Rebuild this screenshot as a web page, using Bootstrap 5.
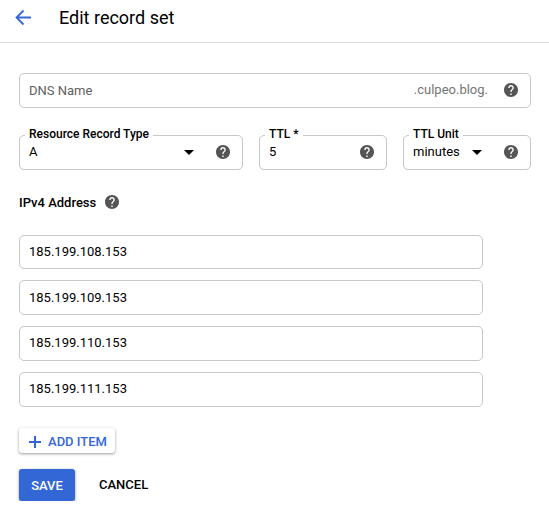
<!DOCTYPE html>
<html lang="en">
<head>
<meta charset="utf-8">
<meta name="viewport" content="width=device-width, initial-scale=1">
<title>Edit record set</title>
<link href="https://cdn.jsdelivr.net/npm/bootstrap@5.3.0/dist/css/bootstrap.min.css" rel="stylesheet">
<style>
body{font-family:Roboto,"Liberation Sans",sans-serif;font-size:13px;line-height:20px;color:#000;background:#fff;overflow:hidden}
.topbar{height:43px;border-bottom:1px solid #dcdcdc;padding:0 0 7px 14px}
.topbar h1{font-size:18px;line-height:24px;font-weight:400;margin-left:26px}
.back-icon{width:19px;height:19px;color:#3367d6}
.page{padding:30px 18px 0 19px}
.box{height:35px;border:1px solid #c8c8c8;border-radius:5px;padding:0 9px}
.box-value{padding-bottom:2px}
.fields{gap:16px;margin-top:27px}
.w-type{width:224px}.w-ttl{width:128px}
.float-label{top:-12px;left:5px;padding:0 4px;background:#fff;font-size:12px;font-weight:500;white-space:nowrap}
.help{width:14px;height:14px;margin:0 3px 1px 0;color:#555;flex:none}
.caret{width:10px;height:5px;flex:none;margin-right:22px}
.label-color{color:#616161}
.hint{color:#757575;margin-right:16px}
.section-label{margin-top:23px;gap:9px;font-weight:500}
.section-label .help{margin-bottom:2px}
.addresses{width:464px;gap:11px;margin-top:22px}
.addresses .box:first-child{height:34px}
.addresses .box:nth-child(n+3){padding-bottom:2px}
.btn-add,.btn-save,.btn-cancel{font-size:13px;font-weight:500;line-height:20px;border:0;border-radius:3px}
.btn-add{height:25px;width:96px;padding:2px 0 0 2px;margin-top:21px;color:#3367d6;background:#fff;box-shadow:0 1px 3px rgba(0,0,0,.4)}
.btn-add svg{margin-right:7px}
.btn-save{width:56px;height:32px;padding:1px 0 0;background:#3367d6;color:#fff;box-shadow:0 1px 3px rgba(0,0,0,.45)}
.btn-cancel{padding:0;margin-left:24px;color:#000}
</style>
</head>
<body>
<svg class="d-none"><symbol id="help" viewBox="2 2 20 20"><path fill="currentColor" d="M12 2C6.480 2 2 6.480 2 12s4.480 10 10 10 10-4.480 10-10S17.520 2 12 2zm1 17h-2v-2h2v2zm2.070-7.750l-.9.920C13.450 12.900 13 13.500 13 15h-2v-.5c0-1.100.45-2.100 1.170-2.830l1.240-1.260c.37-.36.59-.86.59-1.410 0-1.100-.9-2-2-2s-2 .9-2 2H8c0-2.210 1.790-4 4-4s4 1.790 4 4c0 .88-.36 1.680-.93 2.250z"/></symbol></svg>
<header class="topbar d-flex align-items-center">
  <svg class="back-icon" viewBox="0 0 19 19" fill="none" stroke="currentColor" stroke-width="1.8"><path d="M17 9.500H2.500M9.500 2.500l-7 7 7 7"/></svg>
  <h1 class="mb-0">Edit record set</h1>
</header>
<main class="page">
  <div class="box d-flex align-items-center">
    <span class="me-auto label-color">DNS Name</span><span class="hint box-value">.culpeo.blog.</span><svg class="help"><use href="#help"/></svg>
  </div>
  <div class="fields d-flex">
    <div class="box w-type position-relative d-flex align-items-center">
      <label class="float-label position-absolute">Resource Record Type</label>
      <span class="me-auto box-value">A</span><svg class="caret" viewBox="0 0 10 5"><path d="M0 0h10L5 5z"/></svg><svg class="help"><use href="#help"/></svg>
    </div>
    <div class="box w-ttl position-relative d-flex align-items-center">
      <label class="float-label position-absolute">TTL *</label>
      <span class="me-auto box-value">5</span><svg class="help"><use href="#help"/></svg>
    </div>
    <div class="box w-ttl position-relative d-flex align-items-center">
      <label class="float-label position-absolute">TTL Unit</label>
      <span class="me-auto box-value">minutes</span><svg class="caret" viewBox="0 0 10 5"><path d="M0 0h10L5 5z"/></svg><svg class="help"><use href="#help"/></svg>
    </div>
  </div>
  <div class="section-label d-flex align-items-center">
    <span>IPv4 Address</span><svg class="help"><use href="#help"/></svg>
  </div>
  <div class="addresses d-flex flex-column">
    <div class="box d-flex align-items-center">185.199.108.153</div>
    <div class="box d-flex align-items-center">185.199.109.153</div>
    <div class="box d-flex align-items-center">185.199.110.153</div>
    <div class="box d-flex align-items-center">185.199.111.153</div>
  </div>
  <button type="button" class="btn btn-add d-flex align-items-center justify-content-center"><svg width="12" height="12" viewBox="0 0 12 12" fill="none" stroke="currentColor" stroke-width="2"><path d="M6 0v12M0 6h12"/></svg>ADD ITEM</button>
  <div class="d-flex align-items-center mt-3">
    <button type="button" class="btn btn-save">SAVE</button>
    <button type="button" class="btn btn-cancel">CANCEL</button>
  </div>
</main>
<script src="https://cdn.jsdelivr.net/npm/bootstrap@5.3.0/dist/js/bootstrap.bundle.min.js"></script>
</body>
</html>
